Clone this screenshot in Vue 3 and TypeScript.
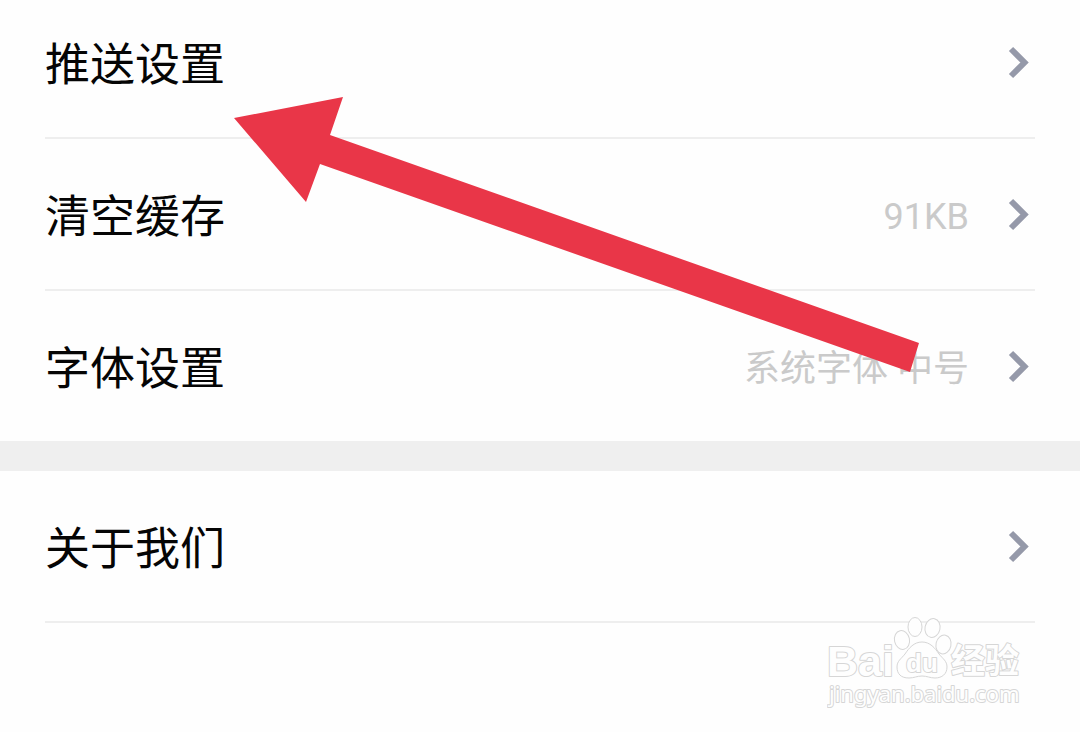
<script setup lang="ts">
interface SettingItem {
  id: string
  label: string
  value?: string
}

const groups: SettingItem[][] = [
  [
    { id: 'push', label: '推送设置' },
    { id: 'cache', label: '清空缓存', value: '91KB' },
    { id: 'font', label: '字体设置', value: '系统字体 中号' },
  ],
  [{ id: 'about', label: '关于我们' }],
]
</script>

<template>
  <main class="settings">
    <section v-for="(group, index) in groups" :key="index" class="group">
      <button v-for="item in group" :key="item.id" type="button" class="row">
        <span class="label">{{ item.label }}</span>
        <span v-if="item.value" class="value">{{ item.value }}</span>
        <svg class="chevron" viewBox="0 0 24 34" aria-hidden="true">
          <path d="M4 4 L17.5 17.5 L4 31" />
        </svg>
      </button>
    </section>

    <svg class="pointer" viewBox="0 0 686 276" aria-hidden="true">
      <path d="M0 21 L109 0 L96 38 L685 246 L676 275 L86 67 L72 105 Z" />
    </svg>

    <svg class="watermark" viewBox="0 0 200 96" role="img" aria-label="Baidu 经验">
      <g class="outline">
        <ellipse cx="75" cy="25" rx="7.5" ry="9.5" transform="rotate(-12 75 25)" />
        <ellipse cx="88" cy="12" rx="7" ry="9.5" />
        <ellipse cx="105.5" cy="13" rx="7.5" ry="9.5" transform="rotate(12 105.5 13)" />
        <ellipse cx="116.5" cy="29.5" rx="7.5" ry="9.5" transform="rotate(12 116.5 29.5)" />
        <path d="M95 27 C103 27 108 33 112 39 C116 44 120 46 120 52 C120 59 115 63 108 63 C103 63 100 61 95 61 C90 61 87 63 82 63 C74 63 70 59 70 52 C70 46 74 44 78 39 C82 33 87 27 95 27 Z" />
        <text class="brand" x="0" y="61">Bai</text>
        <text class="du" x="79" y="57">du</text>
        <text class="word" x="124" y="58">经验</text>
        <text class="site" x="2" y="87">jingyan.baidu.com</text>
      </g>
    </svg>
  </main>
</template>

<style>
body {
  background: #fefefe;
}
</style>

<style scoped>
.settings {
  position: relative;
  overflow: hidden;
  min-height: 100vh;
  background: #fefefe;
  font-family: Roboto, "Noto Sans CJK SC", sans-serif;
}

.group {
  padding: 0 45px;
}

/* The list is scrolled slightly past its first row. */
.group:first-child {
  margin-top: -13px;
}

.group + .group {
  border-top: 30px solid #efefef;
}

.row {
  display: flex;
  align-items: center;
  box-sizing: border-box;
  width: 100%;
  height: 152px;
  padding: 0;
  border: 0;
  border-bottom: 2px solid #eeeeee;
  background: none;
  color: #050505;
  font: inherit;
  text-align: left;
  cursor: pointer;
}

.group:first-child .row:last-child {
  height: 150px;
  border-bottom: 0;
}

.label {
  flex: 1;
  font-family: "Noto Sans CJK SC", sans-serif;
  font-size: 45px;
  line-height: 60px;
}

.value {
  margin: 6px 38px 0 0;
  color: #cacaca;
  font-size: 36px;
  line-height: 48px;
}

.chevron {
  flex: none;
  width: 24px;
  height: 34px;
  margin-right: 4px;
}

.chevron path {
  fill: none;
  stroke: #9599a9;
  stroke-width: 6;
}

.pointer {
  position: absolute;
  top: 97px;
  left: 234px;
  width: 686px;
  height: 276px;
  pointer-events: none;
}

.pointer path {
  fill: #e93648;
}

.watermark {
  position: absolute;
  top: 615px;
  right: 53px;
  width: 200px;
  height: 96px;
  pointer-events: none;
}

.outline {
  fill: #fefefe;
  stroke: #d6d6d6;
  stroke-width: 1;
}

.outline text {
  paint-order: stroke;
  stroke-width: 2;
  stroke-linejoin: round;
}

.brand {
  font: 700 43px "Liberation Sans", sans-serif;
}

.du {
  font: 700 26px "Liberation Sans", sans-serif;
}

.word {
  font: 700 34px "Noto Sans CJK SC", sans-serif;
}

.site {
  font: 400 22px "Noto Sans", sans-serif;
}
</style>
